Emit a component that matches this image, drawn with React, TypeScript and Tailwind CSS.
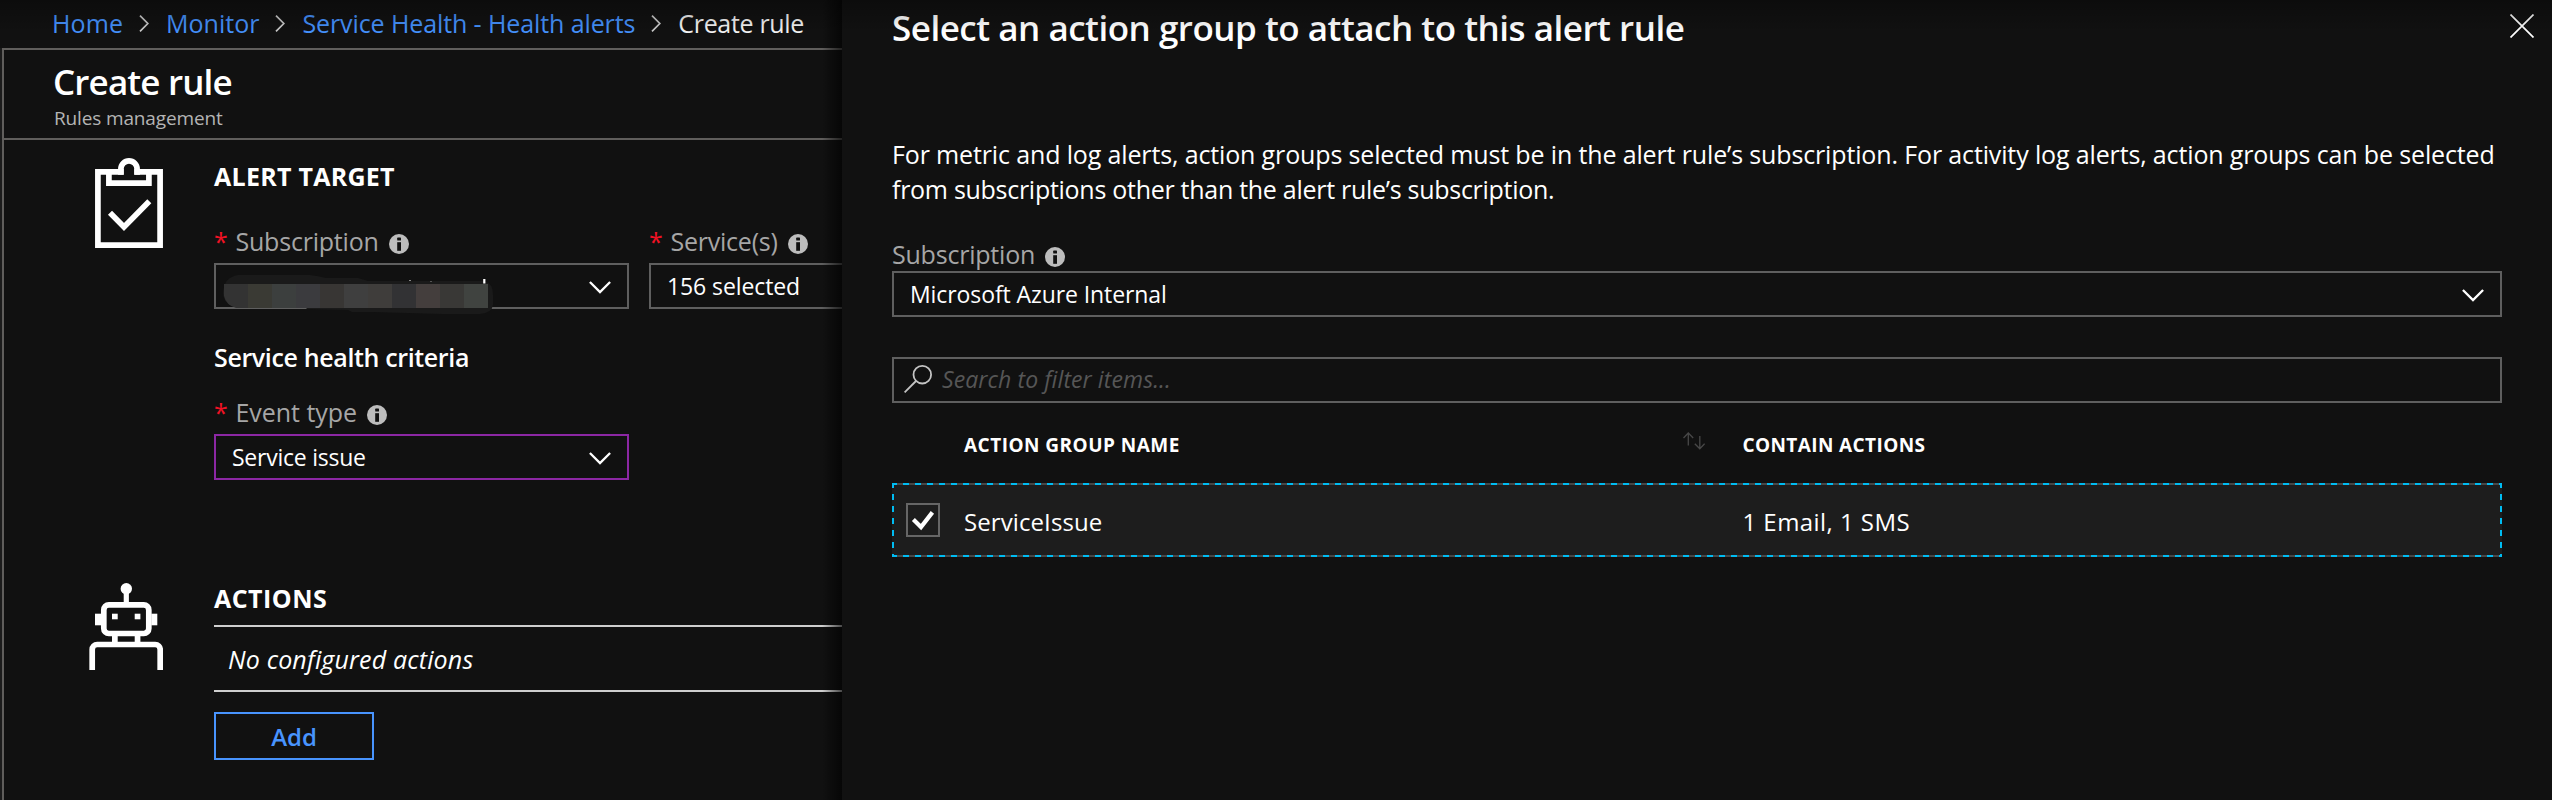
import type { ReactNode } from "react";

function CrumbArrow() {
  return (
    <svg className="ml-4 mr-[17px] mt-[15px] h-[17px] w-[10px] shrink-0" viewBox="0 0 10 17" fill="none" stroke="#c8c8c8" strokeWidth="1.7">
      <path d="M1 0.7 L8.8 8.5 L1 16.3" />
    </svg>
  );
}

function Chevron() {
  return (
    <svg className="mt-[2px] h-[13px] w-[22px] shrink-0" viewBox="0 0 22 13" fill="none" stroke="#fff" strokeWidth="2.3">
      <path d="M0.9 1 L11 11.1 L21.1 1" />
    </svg>
  );
}

function InfoIcon() {
  return (
    <svg className="ml-[10px] mt-[11px] h-5 w-5 shrink-0" viewBox="0 0 20 20">
      <circle cx="10" cy="10" r="10" fill="#bdbdbd" />
      <rect x="8.2" y="3.6" width="3.8" height="3" rx="0.6" fill="#111" />
      <rect x="8.2" y="8.2" width="3.8" height="8.6" fill="#111" />
    </svg>
  );
}

function ClipboardIcon() {
  return (
    <svg className="h-[90px] w-[68px] shrink-0" viewBox="0 0 68 90" fill="none" stroke="#fff" strokeWidth="5.7">
      <path d="M28.7 13.9 H2.9 V87.1 H65.1 V13.9 H39.3" />
      <path d="M13.9 14 V25.2 H53.9 V14" />
      <path d="M25.9 16.7 V11 a8.1 8.1 0 0 1 16.2 0 V16.7" />
      <path d="M15 54.7 L29 68.9 L54.3 43.3" />
    </svg>
  );
}

function RobotIcon() {
  return (
    <svg className="mt-[3px] h-[87px] w-[74px] shrink-0" viewBox="0 0 74 87" fill="none" stroke="#fff" strokeWidth="5.7">
      <circle cx="37.3" cy="5.7" r="5.7" fill="#fff" stroke="none" />
      <path d="M37.3 8 V20" strokeWidth="5.2" />
      <rect x="14.8" y="21.9" width="45" height="28.6" rx="5" />
      <path d="M3.2 87 V66.5 a5 5 0 0 1 5 -5 H66.2 a5 5 0 0 1 5 5 V87" />
      <g fill="#fff" stroke="none">
        <rect x="6" y="30.7" width="6.4" height="11.6" />
        <rect x="62.3" y="30.7" width="6" height="11.6" />
        <rect x="23" y="30.7" width="5.7" height="5.6" />
        <rect x="45.7" y="30.7" width="5.7" height="5.6" />
        <rect x="23" y="53" width="5.7" height="6" />
        <rect x="45.7" y="53" width="5.7" height="6" />
      </g>
    </svg>
  );
}

function SearchIcon() {
  return (
    <svg className="-mt-[2px] h-7 w-7 shrink-0" viewBox="0 0 28 28" fill="none" stroke="#c4c4c4" strokeWidth="1.8">
      <circle cx="18.3" cy="9.7" r="8.8" />
      <path d="M12 16 L0.6 27.4" />
    </svg>
  );
}

function SortIcon() {
  return (
    <svg className="-mt-[8px] h-[18px] w-[22px] shrink-0" viewBox="0 0 22 18" fill="none" stroke="#484848" strokeWidth="1.3">
      <path d="M5.3 13.5 V1 M0.5 6 L5.3 1 L10.2 6" />
      <path d="M16.8 4 V16.7 M11.8 11.7 L16.8 16.7 L21.6 11.7" />
    </svg>
  );
}

const MOSAIC = ["#333333", "#3a3a34", "#3c3f3e", "#3b3b3e", "#383634", "#3f3f3f", "#3f3d3b", "#323234", "#443e3d", "#393836", "#404340"];

function RedactedValue() {
  return (
    <svg className="absolute left-[6px] top-[6px] h-[44px] w-[272px]" viewBox="0 0 272 44">
      <path d="M16 4 H88 Q96 5 104 7 H136 L146 10 H262 Q271 12 271 24 V34 Q270 42 258 43 L220 43 L150 41 H130 L126 39 L85 38 L83 36 H14 Q2 34 1 22 Q2 6 16 4 Z" fill="#1a1a1a" />
      <clipPath id="stroke-end">
        <path d="M2 13 H266 V37 H14 Q4 34 2 25 Z" />
      </clipPath>
      <g clipPath="url(#stroke-end)">
        {MOSAIC.map((color, i) => (
          <rect key={color} x={2 + i * 24} y="13" width="24.2" height="24" fill={color} />
        ))}
      </g>
      <rect x="261.2" y="8" width="2.2" height="4.5" fill="#fff" />
      <rect x="187" y="9" width="2" height="1" fill="#888" />
      <rect x="208" y="10" width="2" height="1" fill="#555" />
    </svg>
  );
}

function FieldLabel({ children }: { children: ReactNode }) {
  return (
    <div className="flex h-10 text-[25px] leading-[37px]">
      <span className="w-[21.5px] text-[#f01224]">*</span>
      {children}
    </div>
  );
}

function Breadcrumb() {
  return (
    <nav className="flex h-12 items-start whitespace-nowrap pl-[52px] text-[25px] leading-[46px] text-[#4490fb]">
      <a className="tracking-[0.1px]">Home</a>
      <CrumbArrow />
      <a>Monitor</a>
      <CrumbArrow />
      <a className="tracking-[-0.1px]">Service Health - Health alerts</a>
      <CrumbArrow />
      <span className="tracking-[-0.32px] text-[#f2f2f2]">Create rule</span>
    </nav>
  );
}

function RuleBlade() {
  return (
    <main className="relative flex w-[842px] shrink-0 flex-col overflow-hidden bg-[#111]">
      <Breadcrumb />
      <div className="flex-1 border-l-2 border-[#1c1c1c]">
        <div className="h-full border-l-2 border-t-2 border-[#605e5c]">
          <header className="h-[90px] border-b-2 border-[#605e5c] pl-[49px] pt-[10px]">
            <h1 className="text-[35px] font-semibold leading-[44px] tracking-[-0.85px]">Create rule</h1>
            <p className="-mt-px pl-px text-[19px] leading-[30px] tracking-[-0.14px] text-[#b4b4b4]">Rules management</p>
          </header>

          <section className="flex gap-[51px] pl-[91px] pt-[18px]">
            <ClipboardIcon />
            <div>
              <h2 className="text-[25px] font-bold leading-[36px] tracking-[0.26px]">ALERT TARGET</h2>
              <div className="mt-[29px] flex gap-5">
                <div>
                  <FieldLabel>
                    <span className="tracking-[-0.21px] text-[#a6a6a6]">Subscription</span>
                    <InfoIcon />
                  </FieldLabel>
                  <div className="relative flex h-[46px] w-[415px] items-center justify-end border-2 border-[#5f5f5f] pr-4">
                    <Chevron />
                    <RedactedValue />
                  </div>
                </div>
                <div>
                  <FieldLabel>
                    <span className="tracking-[-0.23px] text-[#a6a6a6]">Service(s)</span>
                    <InfoIcon />
                  </FieldLabel>
                  <div className="flex h-[46px] w-[415px] items-center border-2 border-[#5f5f5f] px-4 text-[23px] leading-[36px] tracking-[-0.1px]">
                    156 selected
                  </div>
                </div>
              </div>
              <h3 className="mt-[30px] text-[25px] font-semibold leading-[36px] tracking-[-0.36px]">Service health criteria</h3>
              <div className="mt-[19px]">
                <FieldLabel>
                  <span className="tracking-[-0.04px] text-[#a6a6a6]">Event type</span>
                  <InfoIcon />
                </FieldLabel>
                <div className="flex h-[46px] w-[415px] items-center justify-between border-2 border-[#8c27a4] px-4 text-[23px] leading-[36px] tracking-[-0.24px]">
                  Service issue
                  <Chevron />
                </div>
              </div>
            </div>
          </section>

          <section className="mt-[100px] flex gap-[51px] pl-[85px]">
            <RobotIcon />
            <div className="flex-1">
              <h2 className="text-[25px] font-bold leading-[36px] tracking-[0.47px]">ACTIONS</h2>
              <p className="mt-[9px] h-[67px] border-y-2 border-[#cfcfcf] pl-[14px] text-[25px] italic leading-[65px] tracking-[0.16px]">
                No configured actions
              </p>
              <button className="mt-5 h-12 w-[160px] border-2 border-[#4894fe] text-[24px] font-semibold leading-[46px] text-[#4894fe]">
                Add
              </button>
            </div>
          </section>
        </div>
      </div>
      <div className="absolute inset-y-0 right-0 w-5 bg-linear-to-r from-transparent to-black/65" />
    </main>
  );
}

function DashedFrame() {
  return (
    <>
      <i className="absolute inset-y-0 left-0 w-[2px] bg-[repeating-linear-gradient(180deg,#00bcf2_0_5px,#1d1d1d_5px_11px,#00bcf2_11px_12px)]" />
      <i className="absolute inset-y-0 right-0 w-[2px] bg-[repeating-linear-gradient(180deg,#00bcf2_0_5px,#1d1d1d_5px_11px,#00bcf2_11px_12px)]" />
      <i className="absolute inset-x-0 top-0 h-[2px] bg-[repeating-linear-gradient(90deg,#00bcf2_0_5px,#474747_5px_11px,#00bcf2_11px_12px)]" />
      <i className="absolute inset-x-0 bottom-0 h-[2px] bg-[repeating-linear-gradient(90deg,#00bcf2_0_5px,#474747_5px_11px,#00bcf2_11px_12px)]" />
    </>
  );
}

function ActionGroupPanel() {
  return (
    <aside className="flex-1 bg-[#111] px-[50px] pt-[5px]">
      <div className="flex justify-between">
        <h2 className="text-[35px] font-semibold leading-[45px] tracking-[-0.49px]">Select an action group to attach to this alert rule</h2>
        <svg className="-mr-8 mt-[9px] h-6 w-6" viewBox="0 0 24 24" fill="none" stroke="#fff" strokeWidth="1.7">
          <path d="M0.5 0.5 L23.5 23.5 M23.5 0.5 L0.5 23.5" />
        </svg>
      </div>
      <p className="mt-[87px] whitespace-nowrap text-[25px] leading-[35px]">
        <span className="block tracking-[-0.14px]">
          For metric and log alerts, action groups selected must be in the alert rule’s subscription. For activity log alerts, action groups can be selected
        </span>
        <span className="block tracking-[-0.28px]">from subscriptions other than the alert rule’s subscription.</span>
      </p>
      <div className="mt-[29px] flex h-[35px] text-[25px] leading-[37px]">
        <span className="tracking-[-0.21px] text-[#a6a6a6]">Subscription</span>
        <InfoIcon />
      </div>
      <div className="flex h-[46px] items-center justify-between border-2 border-[#5f5f5f] pl-4 pr-4 text-[23px] leading-[36px] tracking-[-0.09px]">
        Microsoft Azure Internal
        <Chevron />
      </div>
      <div className="mt-10 flex h-[46px] items-center gap-[10px] border-2 border-[#5f5f5f] pl-[10px]">
        <SearchIcon />
        <span className="pb-[2px] text-[23px] italic leading-[36px] tracking-[0.1px] text-[#565656]">Search to filter items...</span>
      </div>
      <div className="mt-[27px] grid grid-cols-[72px_778.5px_1fr] text-[19px] font-bold leading-[30px]">
        <span />
        <span className="flex items-center justify-between pr-[37.5px] tracking-[0.47px]">
          ACTION GROUP NAME
          <SortIcon />
        </span>
        <span className="tracking-[0.39px]">CONTAIN ACTIONS</span>
      </div>
      <div className="relative mt-[23px] grid h-[74px] grid-cols-[72px_778.5px_1fr] items-center bg-[#1d1d1d] text-[24px] leading-[36px]">
        <DashedFrame />
        <svg className="ml-[14px] h-[34px] w-[34px]" viewBox="0 0 34 34" fill="none">
          <rect x="1" y="1" width="32" height="32" stroke="#666" strokeWidth="2" />
          <path d="M7.4 16.6 L15 24 L26.4 9.4" stroke="#fff" strokeWidth="4.2" />
        </svg>
        <span className="pt-[4px] tracking-[0.09px]">ServiceIssue</span>
        <span className="pt-[4px] tracking-[0.45px]">1 Email, 1 SMS</span>
      </div>
    </aside>
  );
}

export default function App() {
  return (
    <div className="relative flex h-[800px] w-[2552px] overflow-hidden bg-[#111] font-['Open_Sans','Noto_Sans',sans-serif] text-white">
      <RuleBlade />
      <ActionGroupPanel />
      <div className="pointer-events-none absolute inset-x-0 top-0 h-8 bg-linear-to-b from-black/30 to-transparent" />
    </div>
  );
}
